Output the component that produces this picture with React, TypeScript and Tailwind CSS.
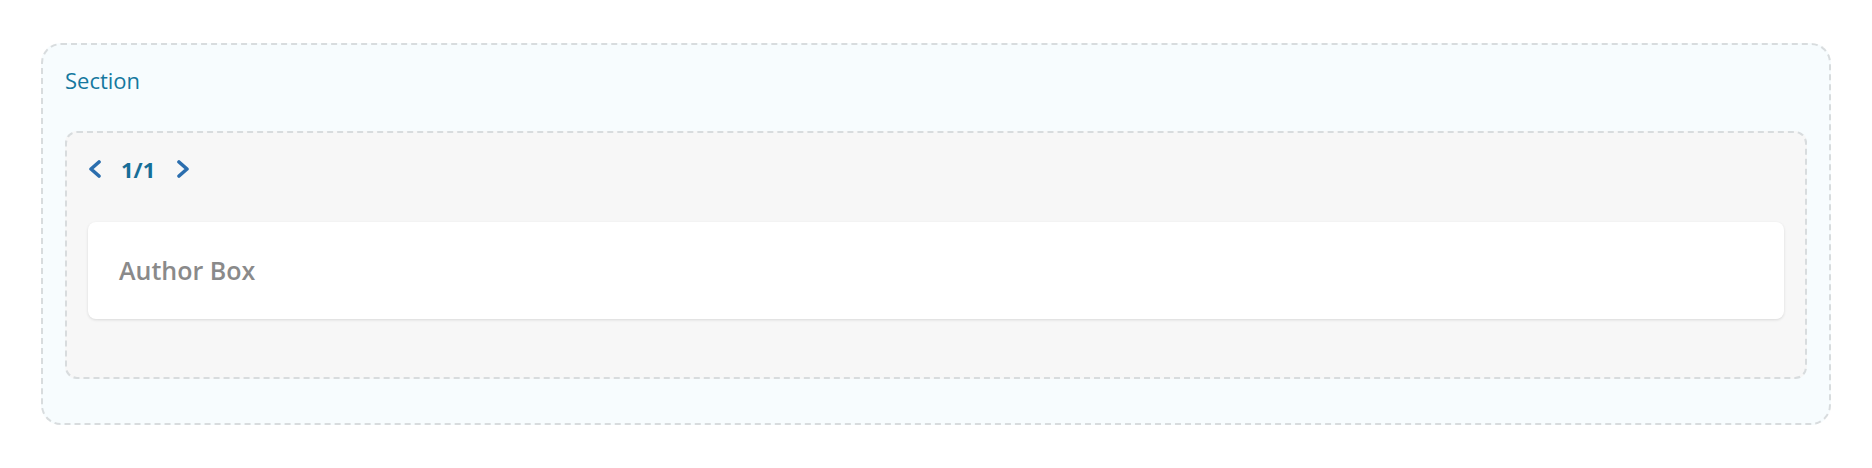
function Chevron({ dir }: { dir: "left" | "right" }) {
  return (
    <svg width="14" height="18" viewBox="0 0 14 18" fill="none">
      <polyline
        points={dir === "left" ? "11,2 3,9 11,16" : "3,2 11,9 3,16"}
        stroke="#2b6eae"
        strokeWidth="3.6"
        strokeLinecap="round"
        strokeLinejoin="round"
      />
    </svg>
  );
}

export default function App() {
  return (
    <div
      className="w-[1872px] h-[468px] bg-white px-[41px] pt-[43px] pb-[43px]"
      style={{ fontFamily: '"Open Sans", "Noto Sans", sans-serif' }}
    >
      <div className="h-full border-2 border-dashed border-[#d8dcde] rounded-[20px] bg-[#f7fcfe] px-[22px] pt-[20px] flex flex-col">
        <div className="text-[22px] leading-[30px] text-[#15789f]">Section</div>

        <div className="mt-[36px] h-[248px] border-2 border-dashed border-[#d8dcde] rounded-[12px] bg-[#f7f7f7] px-[21px] pt-[23px]">
          <div className="flex items-center h-[26px]">
            <Chevron dir="left" />
            <span className="ml-[19px] mr-[21px] text-[22px] font-bold text-[#176e97] leading-[26px]">
              1/1
            </span>
            <Chevron dir="right" />
          </div>

          <div className="mt-[40px] h-[97px] bg-white rounded-[8px] shadow-[0_1px_3px_rgba(0,0,0,0.12)] flex items-center px-[31px]">
            <span className="text-[25px] font-semibold text-[#8a8a8a]">Author Box</span>
          </div>
        </div>
      </div>
    </div>
  );
}
